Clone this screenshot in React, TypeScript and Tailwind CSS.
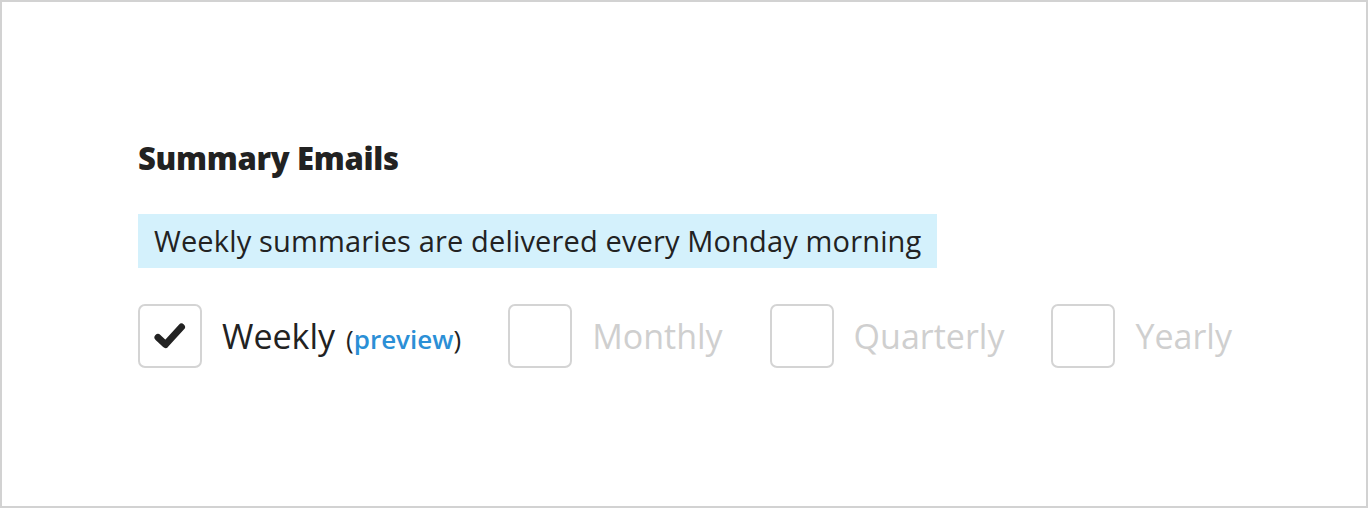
const options = [
  { label: "Weekly", checked: true, preview: true },
  { label: "Monthly", checked: false },
  { label: "Quarterly", checked: false },
  { label: "Yearly", checked: false },
];

function Checkbox({ checked }: { checked: boolean }) {
  return (
    <div className="flex h-[64px] w-[64px] shrink-0 items-center justify-center rounded-[7px] border-2 border-[#d4d4d4] bg-white">
      {checked && (
        <svg width="34" height="30" viewBox="0 0 34 30" fill="none">
          <path
            d="M5 16.5 L12.5 23.5 L28.5 6"
            stroke="#222"
            strokeWidth="7"
            strokeLinecap="round"
            strokeLinejoin="round"
          />
        </svg>
      )}
    </div>
  );
}

export default function App() {
  return (
    <div
      className="box-border h-[508px] w-full border-2 border-[#d2d2d2] bg-white pl-[136px] pt-[134px]"
      style={{ fontFamily: '"Open Sans", "Noto Sans", sans-serif' }}
    >
      <h2 className="text-[31px] font-extrabold leading-[44px] tracking-[-0.3px] text-[#222]">
        Summary Emails
      </h2>
      <div className="mt-[34px] inline-flex h-[54px] items-center bg-[#d4f1fc] px-[16px] text-[29px] tracking-[0.15px] text-[#222]">
        Weekly summaries are delivered every Monday morning
      </div>
      <div className="mt-[36px] flex items-center gap-[47px]">
        {options.map((o) => (
          <label key={o.label} className="flex items-center gap-[20px]">
            <Checkbox checked={o.checked} />
            <span
              className={`text-[34px] ${o.checked ? "text-[#222]" : "text-[#cfcfcf]"}`}
            >
              {o.label}
              {o.preview && (
                <span className="ml-[11px] text-[26px] text-[#222]">
                  (<span className="font-semibold text-[#2b8fd6]">preview</span>)
                </span>
              )}
            </span>
          </label>
        ))}
      </div>
    </div>
  );
}
